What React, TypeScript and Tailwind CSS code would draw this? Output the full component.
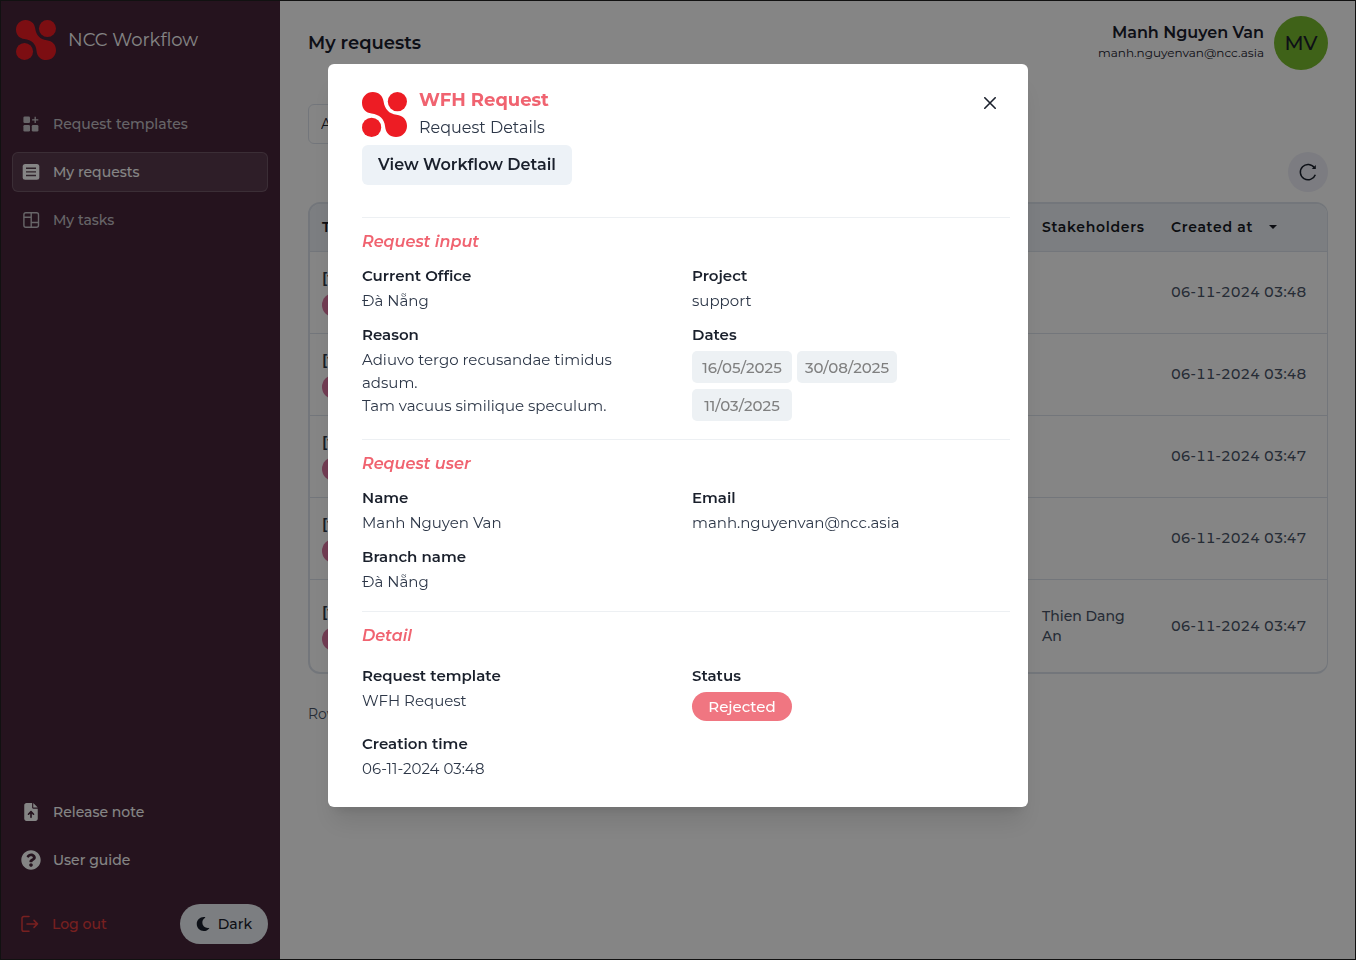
import type { ReactNode } from "react";
import { FaQuestionCircle, FaMoon } from "react-icons/fa";
import { FaFileArrowUp } from "react-icons/fa6";

function Logo({ className }: { className: string }) {
  return (
    <svg viewBox="0 0 45 45" className={className} fill="#ed1c24" aria-hidden="true">
      <circle cx="35.4" cy="9.6" r="9.6" />
      <circle cx="9.6" cy="35.4" r="9.6" />
      <path d="M10.8 0C17 0 20.8 4 21.6 9.5C22.6 17 27 21.800 34.5 22.800C41 23.5 45 28 45 34C45 40.2 40.2 45 34 45C28 45 23.6 41 23.1 34.5C22.4 27 17.5 22.500 9.500 21.500C4 21 0 17 0 10.800C0 4.800 4.800 0 10.800 0Z" />
    </svg>
  );
}

function TemplatesIcon() {
  return (
    <svg viewBox="0 0 20 20" className="size-5" fill="currentColor" aria-hidden="true">
      <rect x="2.400" y="2.500" width="6.600" height="6.600" rx="1.300" />
      <rect x="2.400" y="11" width="6.600" height="6.600" rx="1.300" />
      <rect x="10.800" y="11" width="6.600" height="6.600" rx="1.300" />
      <path d="M14.200 2.800V9M11.100 5.900H17.300" stroke="currentColor" strokeWidth="1.300" />
    </svg>
  );
}

function ListIcon() {
  return (
    <svg viewBox="0 0 20 20" className="size-5" aria-hidden="true">
      <rect x="1.700" y="2" width="16.600" height="15.800" rx="2.500" fill="currentColor" />
      <path d="M5 6.300H15M5 9.900H15M5 13.500H15" stroke="#59404f" strokeWidth="1.400" />
    </svg>
  );
}

function BoardIcon() {
  return (
    <svg viewBox="0 0 20 20" className="size-5" fill="none" stroke="currentColor" strokeWidth="1.400" aria-hidden="true">
      <rect x="2.900" y="2.700" width="14.600" height="14.600" rx="2" />
      <path d="M10.200 2.700V17.300M2.900 7.300H10.200M10.200 12.500H17.500" />
    </svg>
  );
}

function LogOutIcon() {
  return (
    <svg viewBox="0 0 20 20" className="size-5" fill="none" stroke="currentColor" strokeWidth="1.500" strokeLinecap="round" strokeLinejoin="round" aria-hidden="true">
      <path d="M9 2.600H3.800A1.800 1.800 0 0 0 2 4.400V15.400A1.800 1.800 0 0 0 3.800 17.200H9" />
      <path d="M7 9.900H17.500M14 6.400L17.500 9.900L14 13.400" />
    </svg>
  );
}

function NavItem({ icon, label, className }: { icon: ReactNode; label: string; className: string }) {
  return (
    <a href="#" className={`flex h-10 items-center gap-3 rounded-md border px-2 text-sm font-medium ${className}`}>
      {icon}
      {label}
    </a>
  );
}

function Sidebar() {
  return (
    <aside className="flex w-[280px] shrink-0 flex-col bg-[#47253a] px-3 pt-5 pb-4">
      <div className="flex items-center gap-3 px-1">
        <Logo className="size-10" />
        <span className="text-lg text-white">NCC Workflow</span>
      </div>
      <nav className="mt-11 flex flex-col gap-2">
        <NavItem icon={<TemplatesIcon />} label="Request templates" className="border-transparent text-[#c6c2c8]" />
        <NavItem icon={<ListIcon />} label="My requests" className="border-white/15 bg-white/10 text-white" />
        <NavItem icon={<BoardIcon />} label="My tasks" className="border-transparent text-[#c6c2c8]" />
      </nav>
      <div className="mt-auto flex flex-col gap-2">
        <NavItem icon={<FaFileArrowUp className="size-5 p-px" />} label="Release note" className="border-transparent text-white" />
        <NavItem icon={<FaQuestionCircle className="size-5" />} label="User guide" className="border-transparent text-white" />
      </div>
      <div className="mt-6 flex items-center justify-between">
        <button type="button" className="flex h-10 items-center gap-3 px-2 text-sm font-medium text-[#e53e3e]">
          <LogOutIcon />
          Log out
        </button>
        <button type="button" className="flex h-10 items-center gap-2 rounded-full bg-[#edf2f7] px-4 text-sm font-medium text-[#1a202c]">
          <FaMoon className="size-3.5" />
          Dark
        </button>
      </div>
    </aside>
  );
}

const rows = [
  { id: 1, stakeholders: "", createdAt: "06-11-2024 03:48" },
  { id: 2, stakeholders: "", createdAt: "06-11-2024 03:48" },
  { id: 3, stakeholders: "", createdAt: "06-11-2024 03:47" },
  { id: 4, stakeholders: "", createdAt: "06-11-2024 03:47" },
  { id: 5, stakeholders: "Thien Dang An", createdAt: "06-11-2024 03:47" },
];

function RequestTable() {
  return (
    <div className="mt-2.5 overflow-hidden rounded-xl border-2 border-r border-[#dde3ec]">
      <table className="w-full table-fixed text-left tabular-nums">
        <thead className="bg-[#edf2f7] text-sm tracking-wider text-[#171923]">
          <tr className="h-[47px] border-b border-[#dde3ec]">
            <th className="px-3 font-semibold">Title</th>
            <th className="w-[129px] px-3 font-semibold">Stakeholders</th>
            <th className="w-[168px] px-3 font-semibold">
              <button type="button" className="flex items-center gap-4 tracking-wider">
                Created at
                <svg viewBox="0 0 8 4" className="h-1 w-2" fill="currentColor" aria-hidden="true">
                  <path d="M0 0H8L4 4Z" />
                </svg>
              </button>
            </th>
          </tr>
        </thead>
        <tbody className="text-sm font-medium text-[#4a5568]">
          {rows.map((row) => (
            <tr key={row.id} className="h-[82px] border-b border-[#dde3ec] last:h-[93px] last:border-b-0">
              <td className="px-3">
                <div className="flex flex-col items-start gap-1">
                  <span className="text-[15px] leading-[22px] font-semibold text-[#2d3748]">[t1]</span>
                  <span className="h-6 w-24 rounded-full bg-[#d9759f]" />
                </div>
              </td>
              <td className="px-3 leading-5">{row.stakeholders}</td>
              <td className="px-3 whitespace-nowrap">{row.createdAt}</td>
            </tr>
          ))}
        </tbody>
      </table>
    </div>
  );
}

function Field({ label, children }: { label: string; children: ReactNode }) {
  return (
    <div>
      <dt className="text-[15px] leading-[23px] font-semibold text-[#1a202c]">{label}</dt>
      <dd className="mt-0.5 text-[15px] leading-[23px] text-[#2d3748]">{children}</dd>
    </div>
  );
}

function Section({ title, children }: { title: string; children: ReactNode }) {
  return (
    <section className="mt-[18px] border-t border-[#edf0f3] pt-3">
      <h3 className="text-base font-semibold text-[#f06370] italic">{title}</h3>
      {children}
    </section>
  );
}

function RequestDialog() {
  return (
    <div role="dialog" aria-modal="true" aria-labelledby="dialog-title" className="relative w-full max-w-[700px] rounded-md bg-white pt-6 pr-[18px] pb-[27px] pl-[34px] text-[#2d3748] shadow-xl">
      <button type="button" aria-label="Close" className="absolute top-[23px] right-[22px] flex size-8 items-center justify-center text-[#1a202c]">
        <svg viewBox="0 0 12 12" className="size-3" stroke="currentColor" strokeWidth="1.600" strokeLinecap="round" aria-hidden="true">
          <path d="M.8 .8L11.200 11.200M11.200 .8L.8 11.200" />
        </svg>
      </button>
      <header className="flex items-center gap-3">
        <Logo className="size-[45px]" />
        <div>
          <h2 id="dialog-title" className="text-lg leading-6 font-bold text-[#f06370]">WFH Request</h2>
          <p className="mt-1 text-base">Request Details</p>
        </div>
      </header>
      <button type="button" className="mt-[5px] flex h-10 items-center rounded-md bg-[#edf2f7] px-4 text-base font-semibold text-[#1a202c]">
        View Workflow Detail
      </button>
      <div className="mt-8">
        <Section title="Request input">
          <dl className="mt-2.5 grid grid-cols-2 gap-x-3 gap-y-[11px]">
            <Field label="Current Office">Đà Nẵng</Field>
            <Field label="Project">support</Field>
            <Field label="Reason">
              Adiuvo tergo recusandae timidus
              <br />
              adsum.
              <br />
              Tam vacuus similique speculum.
            </Field>
            <Field label="Dates">
              <span className="flex max-w-[240px] flex-wrap gap-x-[5px] gap-y-1.5 pt-[3px]">
                {["16/05/2025", "30/08/2025", "11/03/2025"].map((date) => (
                  <span key={date} className="flex h-8 w-[100px] items-center justify-center rounded-[5px] bg-[#edf1f4] font-medium text-[#808080]">
                    {date}
                  </span>
                ))}
              </span>
            </Field>
          </dl>
        </Section>
        <Section title="Request user">
          <dl className="mt-2.5 grid grid-cols-2 gap-x-3 gap-y-[11px]">
            <Field label="Name">Manh Nguyen Van</Field>
            <Field label="Email">manh.nguyenvan@ncc.asia</Field>
            <Field label="Branch name">Đà Nẵng</Field>
          </dl>
        </Section>
        <Section title="Detail">
          <dl className="mt-4 grid grid-cols-2 gap-x-3 gap-y-[11px]">
            <Field label="Request template">WFH Request</Field>
            <Field label="Status">
              <span className="flex pt-[3px]">
                <span className="flex h-[29px] w-[100px] items-center justify-center rounded-full bg-[#f07681] font-medium text-white">Rejected</span>
              </span>
            </Field>
            <Field label="Creation time">06-11-2024 03:48</Field>
          </dl>
        </Section>
      </div>
    </div>
  );
}

export default function App() {
  return (
    <div className="flex min-h-screen bg-white font-[Montserrat,Inter,sans-serif] text-[#1a202c]">
      <Sidebar />
      <main className="flex min-w-0 flex-1 flex-col px-7 pt-4">
        <header className="flex items-center justify-between">
          <h1 className="text-lg font-semibold">My requests</h1>
          <div className="flex items-center gap-2.5">
            <div className="text-right">
              <div className="text-base leading-5 font-semibold">Manh Nguyen Van</div>
              <div className="text-xs leading-5">manh.nguyenvan@ncc.asia</div>
            </div>
            <div className="flex size-[54px] items-center justify-center rounded-full bg-[#7abc2e] text-xl font-medium">MV</div>
          </div>
        </header>
        <select aria-label="Request type" className="mt-[34px] h-10 w-60 appearance-none rounded-md border border-[#dde3ec] px-3 text-sm">
          <option>All templates</option>
        </select>
        <button type="button" aria-label="Refresh" className="mt-2 flex size-10 items-center justify-center self-end rounded-full bg-[#edeef7]">
          <svg viewBox="0 0 20 20" className="size-5" fill="none" stroke="currentColor" strokeWidth="1.500" aria-hidden="true">
            <path d="M17.300 12.700A7.700 7.700 0 1 1 16.500 5.900" />
            <path d="M17.800 3V7H13.800Z" fill="currentColor" stroke="none" />
          </svg>
        </button>
        <RequestTable />
        <div className="mt-7 text-sm leading-6 text-[#4a5568]">Rows</div>
      </main>
      <div className="fixed inset-0 flex items-start justify-center overflow-auto bg-black/48 pt-16">
        <RequestDialog />
      </div>
      <div className="pointer-events-none fixed inset-0 border border-[#111]" />
    </div>
  );
}
